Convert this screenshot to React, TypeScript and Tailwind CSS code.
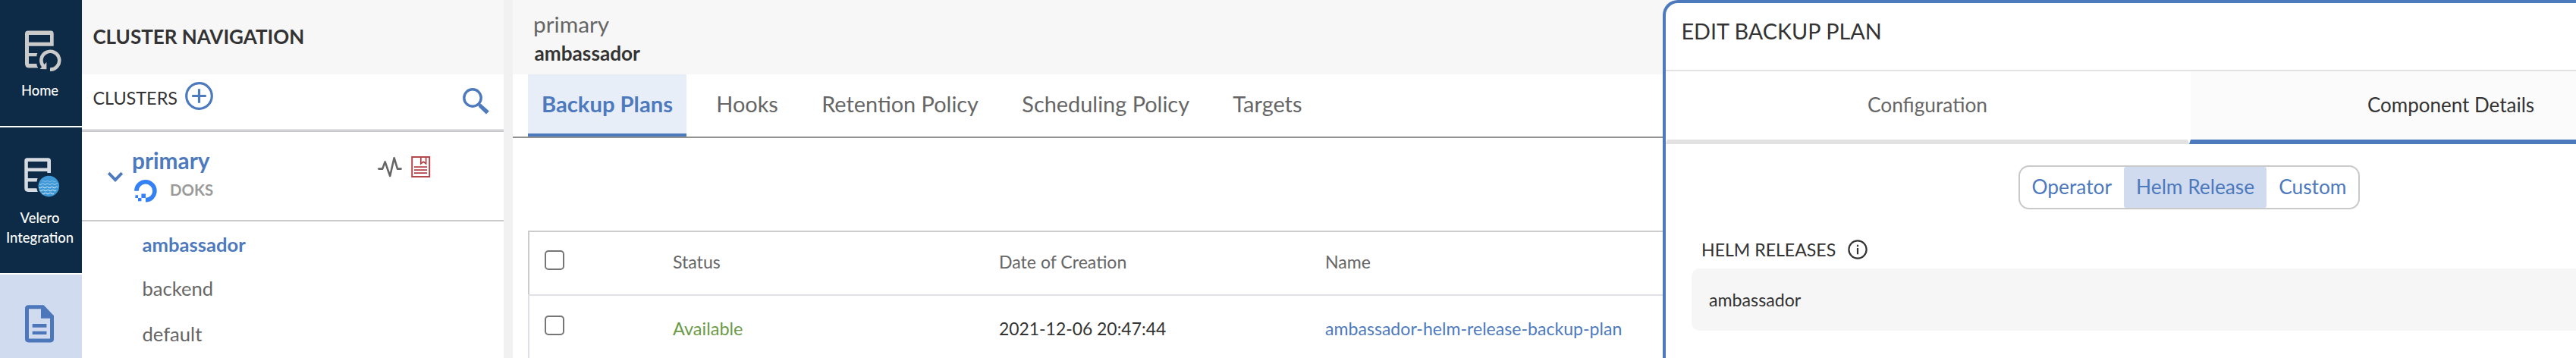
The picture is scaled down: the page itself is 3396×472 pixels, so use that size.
import type { ReactNode } from 'react';

function HomeIcon() {
  return (
    <svg className="ml-[33px] block h-[54px] w-[48px]" viewBox="33 40 48 54" fill="none">
      <path d="M37 40.5H67Q70.7 40.5 70.7 44.3V60.7H38V70H49.4Q48.2 72 48.4 74.3H38V84H48.3Q48.4 87 50.3 89.6H38.5Q33 89.6 33 84V44.5Q33 40.5 37 40.5ZM38 46V55.7H66V46Z" fill="#cacaca" fillRule="evenodd" />
      <path d="M66 91.6A11.9 11.9 0 1 0 57.4 87.6" stroke="#cacaca" strokeWidth="4.6" />
      <path d="M52.6 90.9L57 86.2L61.4 82V91.2Z" fill="#cacaca" />
    </svg>
  );
}

function VeleroIcon() {
  return (
    <svg className="ml-[32px] block h-[53px] w-[48px]" viewBox="32 208 48 53" fill="none">
      <path d="M36 208.3H63.3Q67 208.3 67 212V228H62.3V226H36.8V235H49.6Q48.8 237 48.6 239.4H36.8V248.3H48.4Q48.8 250.8 49.8 252.9H37Q32.3 252.9 32.3 248V212Q32.3 208.3 36 208.3ZM36.8 213V221.4H62.3V213Z" fill="#d6dae1" fillRule="evenodd" />
      <circle cx="64.3" cy="245.6" r="13.8" fill="#3e98d6" />
      <g stroke="#b4d8f2" strokeWidth="1.1">
        <path d="M55 239q1.6-1.4 3.1 0t3.1 0t3.1 0t3.1 0t3.1 0t3.1 0" opacity="0.45" />
        <path d="M51.8 242.6q1.6 1.6 3.1 0t3.1 0t3.1 0t3.1 0t3.1 0t3.1 0t3.1 0t3.1 0" opacity="0.7" />
        <path d="M51.4 247q1.6 1.6 3.1 0t3.1 0t3.1 0t3.1 0t3.1 0t3.1 0t3.1 0t3.1 0" />
        <path d="M52.4 251q1.6 1.6 3.1 0t3.1 0t3.1 0t3.1 0t3.1 0t3.1 0t3.1 0" />
        <path d="M55.4 255q1.6 1.6 3.1 0t3.1 0t3.1 0t3.1 0t3.1 0" />
      </g>
    </svg>
  );
}

function DocumentIcon() {
  return (
    <svg className="ml-[33px] block h-[50px] w-[38px]" viewBox="33 402 38 50" fill="#4d77bb">
      <path fillRule="evenodd" d="M37.5 402.3H57.6L71 416.2V447Q71 451.4 66.7 451.4H37.5Q33 451.4 33 447V406.8Q33 402.3 37.5 402.3ZM38 407.3V446.4H66V419.8H54V407.3Z" />
      <path d="M42.7 427H61.4V431.7H42.7ZM42.7 436.7H61.4V441H42.7Z" />
    </svg>
  );
}

function PlusIcon() {
  return (
    <svg className="h-[37px] w-[37px]" viewBox="0 0 37 37" fill="none" stroke="#4d79bd" strokeWidth="3.2">
      <circle cx="18.5" cy="18.5" r="16.8" />
      <path d="M9.2 18.5H27.8M18.5 9.2V27.8" />
    </svg>
  );
}

function SearchIcon() {
  return (
    <svg className="h-[35px] w-[36px]" viewBox="0 0 36 35" fill="none">
      <circle cx="13" cy="13" r="11.2" stroke="#4d79bd" strokeWidth="3.4" />
      <path d="M20.4 22.8L23.6 20.6L34.8 30.6L31 34.6L21.6 25.6Z" fill="#4d79bd" />
    </svg>
  );
}

function PulseIcon() {
  return (
    <svg className="h-[32px] w-[32px]" viewBox="0 0 32 32" fill="none" stroke="#666" strokeWidth="2.6" strokeLinejoin="round" strokeLinecap="round">
      <path d="M1.3 17.6H6.2L9.6 8.4L16.2 27L21.6 3.2L26 17.6H30.6" />
    </svg>
  );
}

function LogIcon() {
  return (
    <svg className="h-[28px] w-[26px]" viewBox="0 0 26 28" fill="none" stroke="#b04144" strokeWidth="1.9">
      <rect x="1.2" y="1" width="23" height="26" />
      <path d="M12.8 1V9.8L16.2 7.2L19.6 9.8V1" strokeWidth="1.7" />
      <path d="M4 14.1H21M4 18.1H21M4 22.1H21" />
    </svg>
  );
}

function DigitalOceanIcon() {
  return (
    <svg className="h-[30px] w-[30px]" viewBox="0 0 30 30">
      <path d="M2.9 14.8A12 12 0 1 1 15 26.8" fill="none" stroke="#3480f5" strokeWidth="5.6" />
      <path d="M9.4 18.4H15V24H9.4ZM5 24H9.4V28.3H5ZM1.4 20.3H5V24H1.4Z" fill="#3480f5" />
    </svg>
  );
}

function InfoIcon() {
  return (
    <svg className="h-[26px] w-[26px]" viewBox="0 0 26 26" fill="none" stroke="#333" strokeWidth="2.2">
      <circle cx="13" cy="13" r="11.6" />
      <path d="M13 11V19.2M13 6.8V9.2" strokeWidth="2.2" />
    </svg>
  );
}

function Checkbox({ className }: { className: string }) {
  return <span className={`block h-[26px] w-[26px] rounded-[5px] border-2 border-[#767676] bg-white ${className}`} />;
}

function Tab({ children, active }: { children: ReactNode; active?: boolean }) {
  return active ? (
    <button className="h-[82px] border-b-4 border-[#4d79bd] bg-[#e8eef8] px-[18px] text-[29.2px] leading-[78px] font-bold text-[#4d79bd]">{children}</button>
  ) : (
    <button className="h-[82px] px-[18px] pb-1 text-[28.9px] leading-[78px] text-[#666]">{children}</button>
  );
}

function Rail() {
  return (
    <nav className="flex w-[108px] shrink-0 flex-col gap-[2px] bg-white text-center text-[18.4px] leading-[26px] font-medium text-white">
      <a className="block h-[166px] bg-[#0d2b46] pt-[40px]">
        <HomeIcon />
        <span className="mt-[12px] block w-[105px]">Home</span>
      </a>
      <a className="block h-[192px] bg-[#0d2b46] pt-[40px]">
        <VeleroIcon />
        <span className="mt-[13px] block w-[105px]">Velero Integration</span>
      </a>
      <a className="block h-[110px] bg-[#d0dbef] pt-[40px]">
        <DocumentIcon />
      </a>
    </nav>
  );
}

function ClusterNavigation() {
  return (
    <aside className="flex w-[556px] shrink-0 flex-col bg-white">
      <h2 className="h-[98px] bg-[#f7f7f7] pt-[32px] pl-[14.4px] text-[26px] leading-[32px] font-bold text-[#333]">CLUSTER NAVIGATION</h2>
      <div className="flex h-[72px] items-start pl-[14.4px]">
        <span className="mt-[17px] text-[23.4px] leading-[28px] text-[#333]">CLUSTERS</span>
        <span className="mt-[9.5px] ml-[9.6px]"><PlusIcon /></span>
        <span className="mt-[17.5px] mr-[18.5px] ml-auto"><SearchIcon /></span>
      </div>
      <div className="h-[2px] bg-[#dfe0e4]" />
      <div className="h-[2px] bg-[#c8c8cb]" />
      <div className="flex h-[118px] items-start border-b-2 border-[#ccc]">
        <svg className="mt-[52px] ml-[33px] h-[16px] w-[22px]" viewBox="0 0 22 16" fill="none" stroke="#4d79bd" strokeWidth="3.8">
          <path d="M2.2 2.2L11 11.2L19.8 2.2" />
        </svg>
        <div className="mt-[20px] ml-[11px]">
          <div className="text-[29.8px] leading-[36px] font-bold text-[#4d79bd]">primary</div>
          <div className="mt-[7px] ml-[3px] flex items-start gap-[17px]">
            <DigitalOceanIcon />
            <span className="mt-px text-[20.4px] leading-[24px] font-bold text-[#9a9a9a]">DOKS</span>
          </div>
        </div>
        <span className="mt-[31px] mr-[12px] ml-auto"><PulseIcon /></span>
        <span className="mt-[32px] mr-[96px]"><LogIcon /></span>
      </div>
      <ul className="pt-px pl-[79.5px] text-[25.6px] text-[#666]">
        <li className="h-[58px] leading-[59px] font-bold text-[#4d79bd]">ambassador</li>
        <li className="h-[60px] leading-[59px]">backend</li>
        <li className="h-[58px] leading-[59px]">default</li>
      </ul>
    </aside>
  );
}

function PlansPage() {
  return (
    <main className="flex w-[2720px] shrink-0 flex-col bg-white">
      <header className="h-[98px] bg-[#f7f7f7] pt-[14px] pl-[27px]">
        <div className="text-[29.8px] leading-[36px] text-[#666]">primary</div>
        <div className="mt-[4px] ml-[1.5px] text-[26.2px] leading-[32px] font-bold text-[#333]">ambassador</div>
      </header>
      <div className="flex h-[84px] gap-[21.3px] border-b-2 border-[#929292] pl-[20px]">
        <Tab active>Backup Plans</Tab>
        <Tab>Hooks</Tab>
        <Tab>Retention Policy</Tab>
        <Tab>Scheduling Policy</Tab>
        <Tab>Targets</Tab>
      </div>
      <div className="mt-[122px] ml-[20px] text-[23.1px] leading-[28px]">
        <div className="grid h-[84px] grid-cols-[189px_430px_430px_1fr] items-start border-t-2 border-l-2 border-[#ccc] text-[#666]">
          <Checkbox className="mt-[24px] ml-[20px]" />
          <span className="mt-[25px]">Status</span>
          <span className="mt-[25px]">Date of Creation</span>
          <span className="mt-[25px]">Name</span>
        </div>
        <div className="grid h-[84px] grid-cols-[189px_430px_430px_1fr] items-start border-t-2 border-l-2 border-[#dfe1e6]">
          <Checkbox className="mt-[26px] ml-[20px]" />
          <span className="mt-[29px] text-[23.5px] text-[#6a9a45]">Available</span>
          <span className="mt-[29px] text-[22.9px] text-[#333]">2021-12-06 20:47:44</span>
          <a className="mt-[29px] text-[#4d79bd]">ambassador-helm-release-backup-plan</a>
        </div>
      </div>
    </main>
  );
}

function EditPlanPanel() {
  return (
    <section className="absolute top-0 left-[2192px] h-[520px] w-[1384px] overflow-hidden rounded-tl-[20px] border-t-4 border-l-4 border-[#4d79bd] bg-white">
      <h2 className="h-[90px] border-b-2 border-[#e2e2e2] pt-[20px] pl-[20.4px] text-[28.8px] leading-[34px] text-[#333]">EDIT BACKUP PLAN</h2>
      <div className="flex text-center text-[26px] leading-[88px]">
        <div className="h-[96px] w-[690px] border-x-2 border-b-[6px] border-x-transparent border-b-[#e2e2e2] text-[26.3px] text-[#666]">Configuration</div>
        <div className="h-[96px] w-[690px] border-x-2 border-b-[6px] border-x-transparent border-b-[#4d79bd] bg-[#fbfbfb] bg-clip-padding text-[#333]">Component Details</div>
      </div>
      <div className="mt-[28px] flex justify-center">
        <div className="flex h-[58px] rounded-[14px] border-2 border-[#c9c9c9] text-[26.3px] leading-[52px] text-[#4d79bd]">
          <span className="px-[16px]">Operator</span>
          <span className="rounded-[3px] bg-[#d0dbef] px-[16px]">Helm Release</span>
          <span className="px-[16px]">Custom</span>
        </div>
      </div>
      <div className="mt-[39px] ml-[47px] flex items-center gap-[16px] text-[23.1px] leading-[28px] text-[#333]">
        <span>HELM RELEASES</span>
        <InfoIcon />
      </div>
      <div className="mt-[11px] mr-[34px] ml-[34px] h-[82px] rounded-[10px] bg-[#f6f6f6] pl-[23px] text-[23.2px] leading-[82px] text-[#333]">ambassador</div>
    </section>
  );
}

export default function App() {
  return (
    <div className="relative flex h-[472px] w-[3396px] overflow-hidden bg-white font-['Lato',sans-serif]">
      <Rail />
      <ClusterNavigation />
      <div className="w-[12px] shrink-0 bg-[#f1f1f1]" />
      <PlansPage />
      <EditPlanPanel />
    </div>
  );
}
